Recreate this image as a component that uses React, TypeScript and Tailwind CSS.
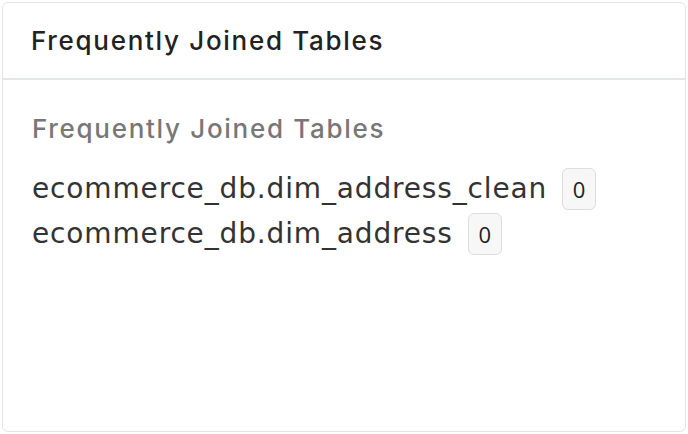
import React from 'react';

const tables = [
  { name: 'ecommerce_db.dim_address_clean', count: 0 },
  { name: 'ecommerce_db.dim_address', count: 0 },
];

export default function App() {
  return (
    <div className="h-[434px] w-[688px] bg-white p-[2px] font-['Inter',sans-serif]">
      <div className="flex h-[430px] w-[684px] flex-col rounded-md border border-[#e3e3e3]">
        {/* Header */}
        <div className="flex h-[77px] items-center border-b-2 border-[#e3e6ec] pl-[28px]">
          <h2 className="text-[26px] font-medium leading-[32px] tracking-[1.7px] text-[#222222]">
            Frequently Joined Tables
          </h2>
        </div>

        {/* Body */}
        <div className="px-[29px] pt-[33px]">
          <h3 className="text-[26px] font-medium leading-[32px] tracking-[1.7px] text-[#777777]">
            Frequently Joined Tables
          </h3>
          <div className="mt-[23px] flex flex-col gap-[3px]">
            {tables.map((t) => (
              <div key={t.name} className="flex h-[42px] items-center gap-[15px]">
                <span className="font-['DejaVu_Sans',sans-serif] text-[28px] leading-[32px] tracking-[0.85px] text-[#333333]">
                  {t.name}
                </span>
                <span className="flex h-[42px] w-[34px] items-center justify-center rounded-md border border-[#dddddd] bg-[#f7f7f7] font-['Open_Sans',sans-serif] text-[22px] text-[#222222]">
                  {t.count}
                </span>
              </div>
            ))}
          </div>
        </div>
      </div>
    </div>
  );
}
